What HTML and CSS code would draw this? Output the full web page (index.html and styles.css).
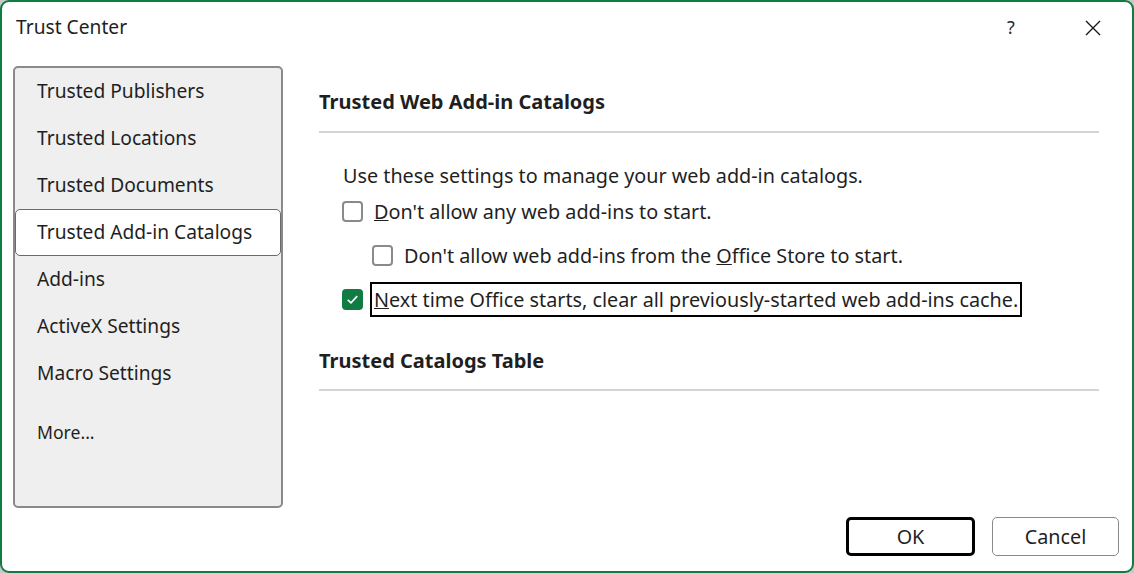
FILE: index.html
```html
<!DOCTYPE html>
<html>
  <head>
    <meta charset="UTF-8">
    <title>Trust Center</title>
    <link rel="stylesheet" href="styles.css">
  </head>
  <body>
    <div class="dialog">
      <div class="titlebar">
        <span class="title">Trust Center</span>
        <span class="help">?</span>
        <span class="close">
          <svg width="16" height="16" viewBox="0 0 16 16">
            <path d="M1 1 L15 15 M15 1 L1 15" stroke="#1a1a1a" stroke-width="1.4" fill="none"/>
          </svg>
        </span>
      </div>
      <div class="main">
        <div class="sidebar">
          <div class="nav-item">Trusted Publishers</div>
          <div class="nav-item">Trusted Locations</div>
          <div class="nav-item">Trusted Documents</div>
          <div class="nav-item selected">Trusted Add-in Catalogs</div>
          <div class="nav-item">Add-ins</div>
          <div class="nav-item">ActiveX Settings</div>
          <div class="nav-item">Macro Settings</div>
          <div class="nav-more">More...</div>
        </div>
        <div class="content">
          <h2 class="section-title">Trusted Web Add-in Catalogs</h2>
          <p class="intro">Use these settings to manage your web add-in catalogs.</p>
          <div class="check-row">
            <span class="checkbox"></span>
            <span class="check-label"><u>D</u>on't allow any web add-ins to start.</span>
          </div>
          <div class="check-row indent">
            <span class="checkbox"></span>
            <span class="check-label">Don't allow web add-ins from the <u>O</u>ffice Store to start.</span>
          </div>
          <div class="check-row">
            <span class="checkbox checked">
              <svg width="13" height="13" viewBox="0 0 13 13">
                <path d="M1.8 6.8 L5 9.8 L11.2 3.2" stroke="#fff" stroke-width="1.7" fill="none"/>
              </svg>
            </span>
            <span class="check-label focused"><u>N</u>ext time Office starts, clear all previously-started web add-ins cache.</span>
          </div>
          <h2 class="section-title second">Trusted Catalogs Table</h2>
        </div>
      </div>
      <div class="footer">
        <button type="button" class="primary">OK</button>
        <button type="button">Cancel</button>
      </div>
    </div>
  </body>
</html>
```

FILE: styles.css
```css
* {
  box-sizing: border-box;
}
body {
  margin: 0;
  background: #c8c8c8;
  font-family: "Noto Sans", sans-serif;
  color: #1f1f1f;
}
.dialog {
  width: 1134px;
  height: 573px;
  background: white;
  border: 2px solid #107c41;
  border-radius: 9px;
  display: flex;
  flex-direction: column;
}
.titlebar {
  height: 64px;
  display: flex;
  align-items: flex-start;
  padding: 12px 0 0 14px;
}
.title {
  font-size: 19.2px;
  line-height: 26px;
  flex: 1;
}
.help {
  font-size: 18px;
  line-height: 26px;
  color: #2a2a2a;
  width: 12px;
  margin-right: 66px;
}
.close {
  width: 16px;
  height: 16px;
  margin-top: 5px;
  margin-right: 31px;
}
.main {
  height: 442px;
  display: flex;
  padding-left: 11px;
}
.sidebar {
  width: 270px;
  background: #efefef;
  border: 2px solid #8a8a8a;
  border-radius: 5px;
}
.nav-item {
  height: 47px;
  line-height: 43px;
  padding-left: 21px;
  font-size: 19.2px;
  border: 1px solid transparent;
  border-radius: 5px;
}
.nav-item.selected {
  background: white;
  border-color: #6a6a6a;
}
.nav-more {
  margin-top: 21px;
  padding-left: 22px;
  font-size: 17.6px;
  line-height: 28px;
}
.content {
  margin-left: 36px;
  width: 780px;
  padding-top: 22px;
}
.section-title {
  margin: 0;
  font-size: 20px;
  font-weight: bold;
  line-height: 28px;
  padding-bottom: 15px;
  border-bottom: 2px solid #d4d4d4;
}
.section-title.second {
  margin-top: 26px;
  padding-bottom: 14px;
}
.intro {
  margin: 30px 0 0 24px;
  font-size: 19.8px;
  line-height: 26px;
}
.check-row {
  height: 44px;
  display: flex;
  align-items: center;
  padding-left: 23px;
  font-size: 19.8px;
}
.check-row.indent {
  padding-left: 53px;
}
.checkbox {
  width: 21px;
  height: 21px;
  border: 2px solid #8a8a8a;
  border-radius: 4px;
  background: white;
  display: flex;
  align-items: center;
  justify-content: center;
}
.checkbox.checked {
  background: #107c41;
  border-color: #107c41;
}
.check-label {
  margin-left: 7px;
  padding: 1px 2px;
  line-height: 29px;
  border: 2px solid transparent;
}
.check-label.focused {
  border-color: black;
}
.footer {
  display: flex;
  justify-content: flex-end;
  gap: 17px;
  padding: 9px 13px 0 0;
}
button {
  width: 127px;
  height: 39px;
  font-family: "Noto Sans", sans-serif;
  font-size: 19.8px;
  color: #1f1f1f;
  background: white;
  border: 1px solid #8a8a8a;
  border-radius: 5px;
}
button.primary {
  width: 129px;
  border: 3px solid black;
}
```
